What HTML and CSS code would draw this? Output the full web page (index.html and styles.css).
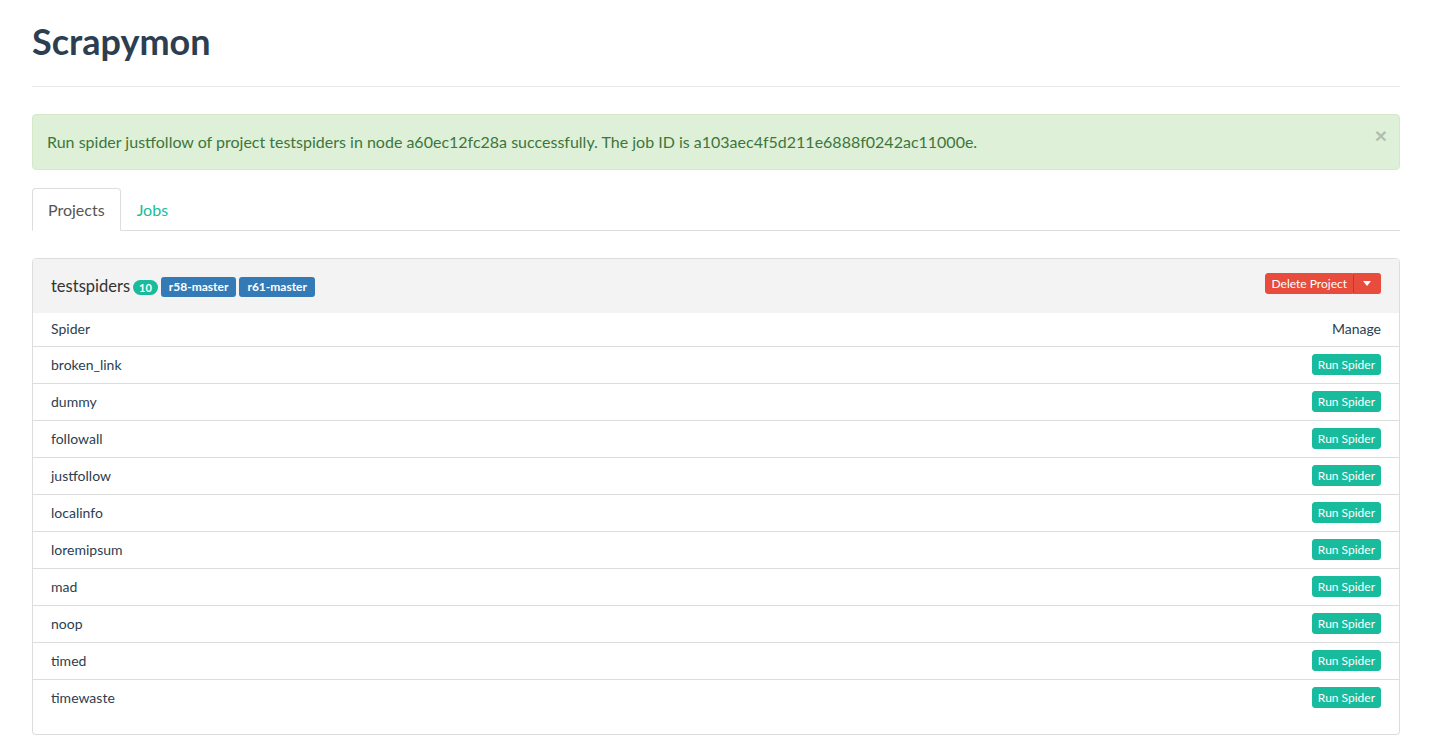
FILE: index.html
```html
<!DOCTYPE html>
<html>
<head>
<meta charset="utf-8">
<title>Scrapymon</title>
<link rel="stylesheet" href="styles.css">
</head>
<body>
<div class="container">
  <div class="page-header">
    <h1>Scrapymon</h1>
  </div>

  <div class="alert">
    <span>Run spider justfollow of project testspiders in node a60ec12fc28a successfully. The job ID is a103aec4f5d211e6888f0242ac11000e.</span>
    <button class="close" type="button">×</button>
  </div>

  <ul class="tabs">
    <li class="tab active"><a>Projects</a></li>
    <li class="tab"><a>Jobs</a></li>
  </ul>

  <div class="panel">
    <div class="panel-heading">
      <div class="project-title">
        <span class="project-name">testspiders</span>
        <span class="badge">10</span>
        <span class="label">r58-master</span>
        <span class="label">r61-master</span>
      </div>
      <div class="btn-group">
        <button class="btn btn-danger" type="button">Delete Project</button><button class="btn btn-danger caret-btn" type="button"><span class="caret"></span></button>
      </div>
    </div>
    <table class="table">
      <thead>
        <tr><th>Spider</th><th class="right">Manage</th></tr>
      </thead>
      <tbody>
        <tr><td>broken_link</td><td class="right"><button class="btn btn-success">Run Spider</button></td></tr>
        <tr><td>dummy</td><td class="right"><button class="btn btn-success">Run Spider</button></td></tr>
        <tr><td>followall</td><td class="right"><button class="btn btn-success">Run Spider</button></td></tr>
        <tr><td>justfollow</td><td class="right"><button class="btn btn-success">Run Spider</button></td></tr>
        <tr><td>localinfo</td><td class="right"><button class="btn btn-success">Run Spider</button></td></tr>
        <tr><td>loremipsum</td><td class="right"><button class="btn btn-success">Run Spider</button></td></tr>
        <tr><td>mad</td><td class="right"><button class="btn btn-success">Run Spider</button></td></tr>
        <tr><td>noop</td><td class="right"><button class="btn btn-success">Run Spider</button></td></tr>
        <tr><td>timed</td><td class="right"><button class="btn btn-success">Run Spider</button></td></tr>
        <tr><td>timewaste</td><td class="right"><button class="btn btn-success">Run Spider</button></td></tr>
      </tbody>
    </table>
  </div>
</div>
</body>
</html>
```

FILE: styles.css
```css
* { box-sizing: border-box; }
html, body { margin: 0; padding: 0; background: #fff; }
body {
  font-family: Lato, "Open Sans", "Liberation Sans", sans-serif;
  font-size: 15px;
  line-height: 1.42857;
  color: #2c3e50;
}
.container {
  padding: 0 35px 0 32px;
}
.page-header {
  padding-top: 22px;
  padding-bottom: 24px;
  border-bottom: 1px solid #eaeaea;
}
.page-header h1 {
  margin: 0;
  font-size: 36px;
  line-height: 1.1;
  font-weight: 700;
  color: #2c3e50;
}
.alert {
  margin-top: 27px;
  display: flex;
  justify-content: space-between;
  align-items: center;
  padding: 16px 14px;
  background: #dff0d8;
  border: 1px solid #d6e9c6;
  border-radius: 4px;
  color: #3c763d;
  font-size: 16px;
  line-height: 22px;
}
.close {
  background: none;
  border: 0;
  padding: 0;
  margin-right: -2px;
  font-family: "Liberation Sans", sans-serif;
  font-size: 21px;
  font-weight: 700;
  line-height: 1;
  color: #000;
  opacity: .2;
  margin-top: -12px;
}
.tabs {
  list-style: none;
  margin: 18px 0 0;
  padding: 0;
  display: flex;
  border-bottom: 1px solid #ddd;
}
.tab { margin-bottom: -1px; }
.tab a {
  display: block;
  padding: 10px 15px;
  font-size: 16px;
  line-height: 21px;
  color: #18bc9c;
  border: 1px solid transparent;
  border-radius: 4px 4px 0 0;
}
.tab.active a {
  color: #555;
  background: #fff;
  border-color: #ddd #ddd transparent;
}
.panel {
  margin-top: 27px;
  border: 1px solid #ddd;
  border-radius: 4px;
  padding-bottom: 18px;
  box-shadow: 0 1px 1px rgba(0,0,0,.05);
}
.panel-heading {
  background: #f3f3f3;
  height: 54px;
  padding: 0 18px;
  display: flex;
  align-items: center;
  justify-content: space-between;
  border-radius: 3px 3px 0 0;
}
.project-title {
  display: flex;
  align-items: center;
  padding-top: 3px;
}
.project-name {
  font-size: 16.5px;
  color: #333;
  margin-right: 3px;
}
.badge {
  display: inline-block;
  background: #18bc9c;
  color: #fff;
  font-size: 11px;
  font-weight: 700;
  line-height: 14px;
  padding: 1px 6px 0;
  border-radius: 10px;
}
.label {
  display: inline-block;
  background: #337ab7;
  color: #fff;
  font-size: 12px;
  font-weight: 700;
  line-height: 14px;
  padding: 3px 8px;
  border-radius: 3px;
  margin-left: 3px;
}
.btn-group { display: flex; margin-top: -5px; }
.btn {
  font-family: inherit;
  font-size: 12px;
  line-height: 17px;
  padding: 1px 5px;
  border: 1px solid transparent;
  border-radius: 3px;
  color: #fff;
  cursor: pointer;
}
.btn-danger { background: #e74c3c; border-color: #e74c3c; }
.btn-group .btn:first-child { border-radius: 3px 0 0 3px; padding: 1px 5px 1px 6px; }
.caret-btn {
  border-radius: 0 3px 3px 0;
  border-left-color: #c0392b;
  width: 28px;
  padding: 1px 0;
  display: flex;
  align-items: center;
  justify-content: center;
}
.caret {
  display: inline-block;
  width: 0; height: 0;
  border-top: 5px solid #fff;
  border-left: 4px solid transparent;
  border-right: 4px solid transparent;
}
.btn-success { background: #18bc9c; border-color: #18bc9c; }
.table {
  width: 100%;
  border-collapse: collapse;
}
.table th, .table td {
  padding: 8px 18px;
  text-align: left;
  font-weight: 400;
  font-size: 14px;
  line-height: 20px;
  color: #2c3e50;
  border-bottom: 1px solid #ddd;
}
.table th {
  padding-top: 6px;
  padding-bottom: 7px;
}
.table tbody tr:last-child td { border-bottom: 0; }
.table .right { text-align: right; }
.table td .btn {
  display: inline-block;
  vertical-align: top;
  margin: -1px 0;
}
```
